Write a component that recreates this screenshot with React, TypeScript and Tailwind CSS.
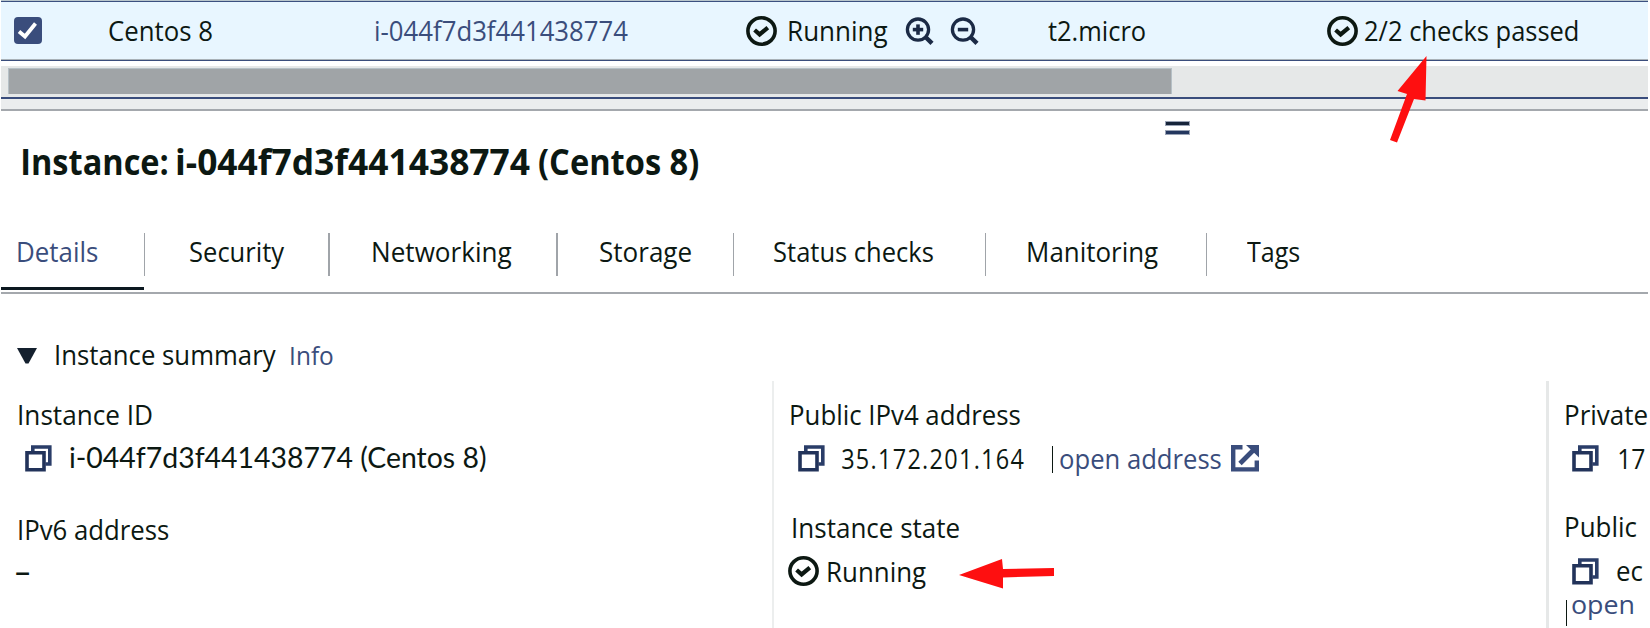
import { useLayoutEffect, useRef } from "react";

// Stretches a line of text so that its drawn glyphs fill the width of its box.
function Fit({ children, className = "" }: { children: string; className?: string }) {
  const outer = useRef<HTMLSpanElement>(null);
  const inner = useRef<HTMLSpanElement>(null);
  useLayoutEffect(() => {
    const o = outer.current!;
    const i = inner.current!;
    const cs = getComputedStyle(i);
    const ctx = document.createElement("canvas").getContext("2d")!;
    ctx.font = `${cs.fontWeight} ${cs.fontSize} ${cs.fontFamily}`;
    const m = ctx.measureText(children);
    const gap = parseFloat(cs.letterSpacing) || 0;
    const ink = m.actualBoundingBoxLeft + m.actualBoundingBoxRight + gap * (children.length - 1);
    const s = o.getBoundingClientRect().width / ink;
    i.style.transform = `translateX(${m.actualBoundingBoxLeft * s}px) scaleX(${s})`;
  }, [children]);
  return (
    <span ref={outer} className={`block h-10 shrink-0 leading-10 ${className}`}>
      <span ref={inner} className="inline-block origin-left whitespace-nowrap">
        {children}
      </span>
    </span>
  );
}

function CheckCircle({ className = "" }: { className?: string }) {
  return (
    <svg viewBox="0 0 31 30" className={`h-[30px] w-[31px] shrink-0 ${className}`} fill="none" stroke="#0c1812">
      <ellipse cx="15.5" cy="15" rx="13.6" ry="13.2" strokeWidth="3.6" />
      <path d="M8.6 14 L13.6 18.4 L21.8 11.6" strokeWidth="4.2" />
    </svg>
  );
}

function Zoom({ plus = false, className = "" }: { plus?: boolean; className?: string }) {
  return (
    <svg viewBox="0 0 29 28" className={`h-[28px] w-[29px] shrink-0 ${className}`} fill="none" stroke="#1b2a45">
      <circle cx="13" cy="12.6" r="10.6" strokeWidth="3.3" />
      <path d="M20.5 20 L27 26.4" strokeWidth="4.4" />
      <path d="M7.8 12.6 H18.2" strokeWidth="3.6" />
      {plus && <path d="M13 7.4 V17.8" strokeWidth="3.6" />}
    </svg>
  );
}

function Copy({ className = "" }: { className?: string }) {
  return (
    <svg viewBox="0 0 27 27" className={`h-[27px] w-[27px] shrink-0 ${className}`} fill="none" strokeWidth="3.6">
      <path d="M7.8 6 V2 H24.8 V19 H20.5" stroke="#2a3d68" />
      <path d="M2 7.8 H19 V24.8 H2 Z" stroke="#22335a" />
    </svg>
  );
}

const line = "bg-[#a0a4a9] h-[43px] w-[1.5px] shrink-0";

export default function App() {
  return (
    <div className="relative h-[628px] w-[1650px] overflow-hidden bg-white pl-px pr-[2px] font-['Open_Sans','Noto_Sans',sans-serif] text-[27px] text-[#0c1812]">
      <div className="h-px bg-[#b9c6cc]" />
      <div className="h-px bg-[#3b5080]" />
      <div className="flex h-[57px] items-center bg-[#e8f6ff]">
        <div className="ml-[13px] flex h-[27px] w-[28px] shrink-0 items-center justify-center rounded-[4px] bg-[#3a4d7c]">
          <svg viewBox="0 0 28 27" className="h-[27px] w-[28px]" fill="none" stroke="#fff" strokeWidth="3.8">
            <path d="M5 14.5 L11 19.5 L21.5 6.5" />
          </svg>
        </div>
        <Fit className="ml-[67px] w-[103.5px]">Centos 8</Fit>
        <Fit className="ml-[163px] w-[251.5px] text-[#3a4d7c]">i-044f7d3f441438774</Fit>
        <CheckCircle className="ml-[119px]" />
        <Fit className="ml-[11.5px] w-[99px]">Running</Fit>
        <Zoom plus className="ml-[17px]" />
        <Zoom className="ml-[16.5px]" />
        <Fit className="ml-[68.5px] w-[97px]">t2.micro</Fit>
        <CheckCircle className="ml-[182.5px]" />
        <Fit className="ml-[7px] w-[213px]">2/2 checks passed</Fit>
      </div>
      <div className="h-px bg-[#a9b2b8]" />
      <div className="h-px bg-[#3a4d7c]" />
      <div className="mt-[5px] h-[31px] bg-[#e6e8e8] pl-[7px] pt-[2px]">
        <div className="h-[26px] w-[1164px] border border-b-0 border-[#b6c0c6] bg-[#a0a4a7]" />
      </div>
      <div className="h-[2px] bg-[#3a4d7c]" />
      <div className="h-[10px] bg-[#ebedee]" />
      <div className="h-[2px] bg-[#a4a8ad]" />

      <div className="ml-[1164px] mt-[10px] h-[5px] w-[25px] border border-[#9aa3b5] bg-[#16243a]" />
      <div className="ml-[1164px] mt-[4px] h-[5px] w-[25px] border border-[#9aa3b5] bg-[#24375f]" />

      <h1 className="mt-[7px] flex text-[35px] font-bold">
        <Fit className="ml-[21.5px] w-[144px]">Instance:</Fit>
        <Fit className="ml-[10px] w-[353px]">i-044f7d3f441438774</Fit>
        <Fit className="ml-[9.5px] w-[159.5px]">(Centos 8)</Fit>
      </h1>

      <div className="mt-[51px] flex h-[43px]">
        <Fit className="-mt-[1px] ml-[17px] w-[79.5px] text-[#3a4d7c]">Details</Fit>
        <div className={`${line} ml-[46px]`} />
        <Fit className="-mt-[1px] ml-[45px] w-[94.5px]">Security</Fit>
        <div className={`${line} ml-[43.5px]`} />
        <Fit className="-mt-[1px] ml-[43.5px] w-[139px]">Networking</Fit>
        <div className={`${line} ml-[44px]`} />
        <Fit className="-mt-[1px] ml-[42px] w-[91px]">Storage</Fit>
        <div className={`${line} ml-[42px]`} />
        <Fit className="-mt-[1px] ml-[40px] w-[159px]">Status checks</Fit>
        <div className={`${line} ml-[51.5px]`} />
        <Fit className="-mt-[1px] ml-[41.5px] w-[130.5px]">Manitoring</Fit>
        <div className={`${line} ml-[47.5px]`} />
        <Fit className="-mt-[1px] ml-[39.5px] w-[52.5px]">Tags</Fit>
      </div>
      <div className="mt-[11px] h-[3px] w-[143px] bg-[#0c1820]" />
      <div className="mt-[2px] h-[2px] bg-[#a4a8ad]" />

      <div className="mt-[40px] flex h-10 items-center">
        <svg viewBox="0 0 20 16" className="ml-[16px] mt-[3px] h-[16px] w-[20px]" fill="#14202e">
          <path d="M0 0 H20 L11.5 15.5 H8.5 Z" />
        </svg>
        <Fit className="ml-[19px] mt-[2px] w-[220px]">Instance summary</Fit>
        <Fit className="ml-[14.5px] mt-[2px] w-[41.5px] text-[25.5px] text-[#3a4d7c]">Info</Fit>
      </div>

      <div className="mt-[7px] flex h-[247px]">
        <div className="w-[771px] shrink-0 pt-[14px]">
          <Fit className="ml-[17.5px] w-[132.5px]">Instance ID</Fit>
          <div className="mt-[3px] flex h-10 items-center">
            <Copy className="ml-[24px]" />
            <Fit className="-mt-[2px] ml-[18px] w-[416px] font-['Lato',sans-serif] text-[28px]">i-044f7d3f441438774 (Centos 8)</Fit>
          </div>
          <Fit className="ml-[17.5px] mt-[32px] w-[149.5px]">IPv6 address</Fit>
          <Fit className="ml-[15px] mt-[1px] w-[13.5px] font-semibold">–</Fit>
        </div>
        <div className="w-[774px] shrink-0 border-l-2 border-[#eceeee] pt-[14px]">
          <Fit className="ml-[16.5px] w-[229px]">Public IPv4 address</Fit>
          <div className="mt-[3px] flex h-10 items-center">
            <Copy className="ml-[24px]" />
            <Fit className="ml-[16.5px] mt-[2px] w-[181.5px] tracking-[1.5px]">35.172.201.164</Fit>
            <div className="ml-[28.5px] mt-[2px] h-[27px] w-px bg-[#0c1812]" />
            <Fit className="ml-[7px] mt-[2px] w-[161px] text-[#3a4d7c]">open address</Fit>
            <svg viewBox="0 0 28 27" className="ml-[10px] h-[27px] w-[28px]" fill="none" stroke="#3a4d7c" strokeWidth="4.4">
              <path d="M11.5 2.2 H2.2 V24.4 H25.8 V15.5" />
              <path d="M9 18.5 L22 5.5" strokeWidth="4.8" />
              <path d="M15 0 H28 V12.5 Z" fill="#3a4d7c" stroke="none" />
            </svg>
          </div>
          <Fit className="ml-[19px] mt-[30px] w-[166px]">Instance state</Fit>
          <div className="mt-[3px] flex h-10 items-center">
            <CheckCircle className="ml-[14px]" />
            <Fit className="ml-[8.5px] mt-[2px] w-[98.5px]">Running</Fit>
          </div>
        </div>
        <div className="w-[102px] shrink-0 overflow-hidden border-l-3 border-[#e6e8e8] pt-[14px]">
          <Fit className="ml-[17px] w-[81px]">Private</Fit>
          <div className="mt-[3px] flex h-10 items-center">
            <Copy className="ml-[23px]" />
            <Fit className="ml-[20px] mt-[2px] w-[26px]">17</Fit>
          </div>
          <Fit className="ml-[16.5px] mt-[29px] w-[71px]">Public</Fit>
          <div className="mt-[4px] flex h-10 items-center">
            <Copy className="ml-[23px]" />
            <Fit className="-mt-[1px] ml-[17.5px] w-[26px]">ec</Fit>
          </div>
          <div className="-mt-[6px] flex h-11 items-start">
            <div className="ml-[17px] mt-[15px] h-[26px] w-px bg-[#0c1812]" />
            <Fit className="-mt-px ml-[5px] w-[61px] text-[26px] text-[#3a4d7c]">open</Fit>
          </div>
        </div>
      </div>

      <svg viewBox="0 0 40 90" className="absolute left-[1389px] top-[55px] h-[90px] w-[40px]" fill="#fe0f10">
        <path d="M37.5 1 L8.5 36 L18 39 L1 85 L8 87.5 L25 44 L36.5 45.5 Z" />
      </svg>
      <svg viewBox="0 0 96 32" className="absolute left-[959px] top-[558px] h-[32px] w-[96px]" fill="#fe0f10">
        <path d="M0 17 L43 1 L44 11 L95 10 V18 L44 19.5 V30.5 Z" />
      </svg>
    </div>
  );
}
